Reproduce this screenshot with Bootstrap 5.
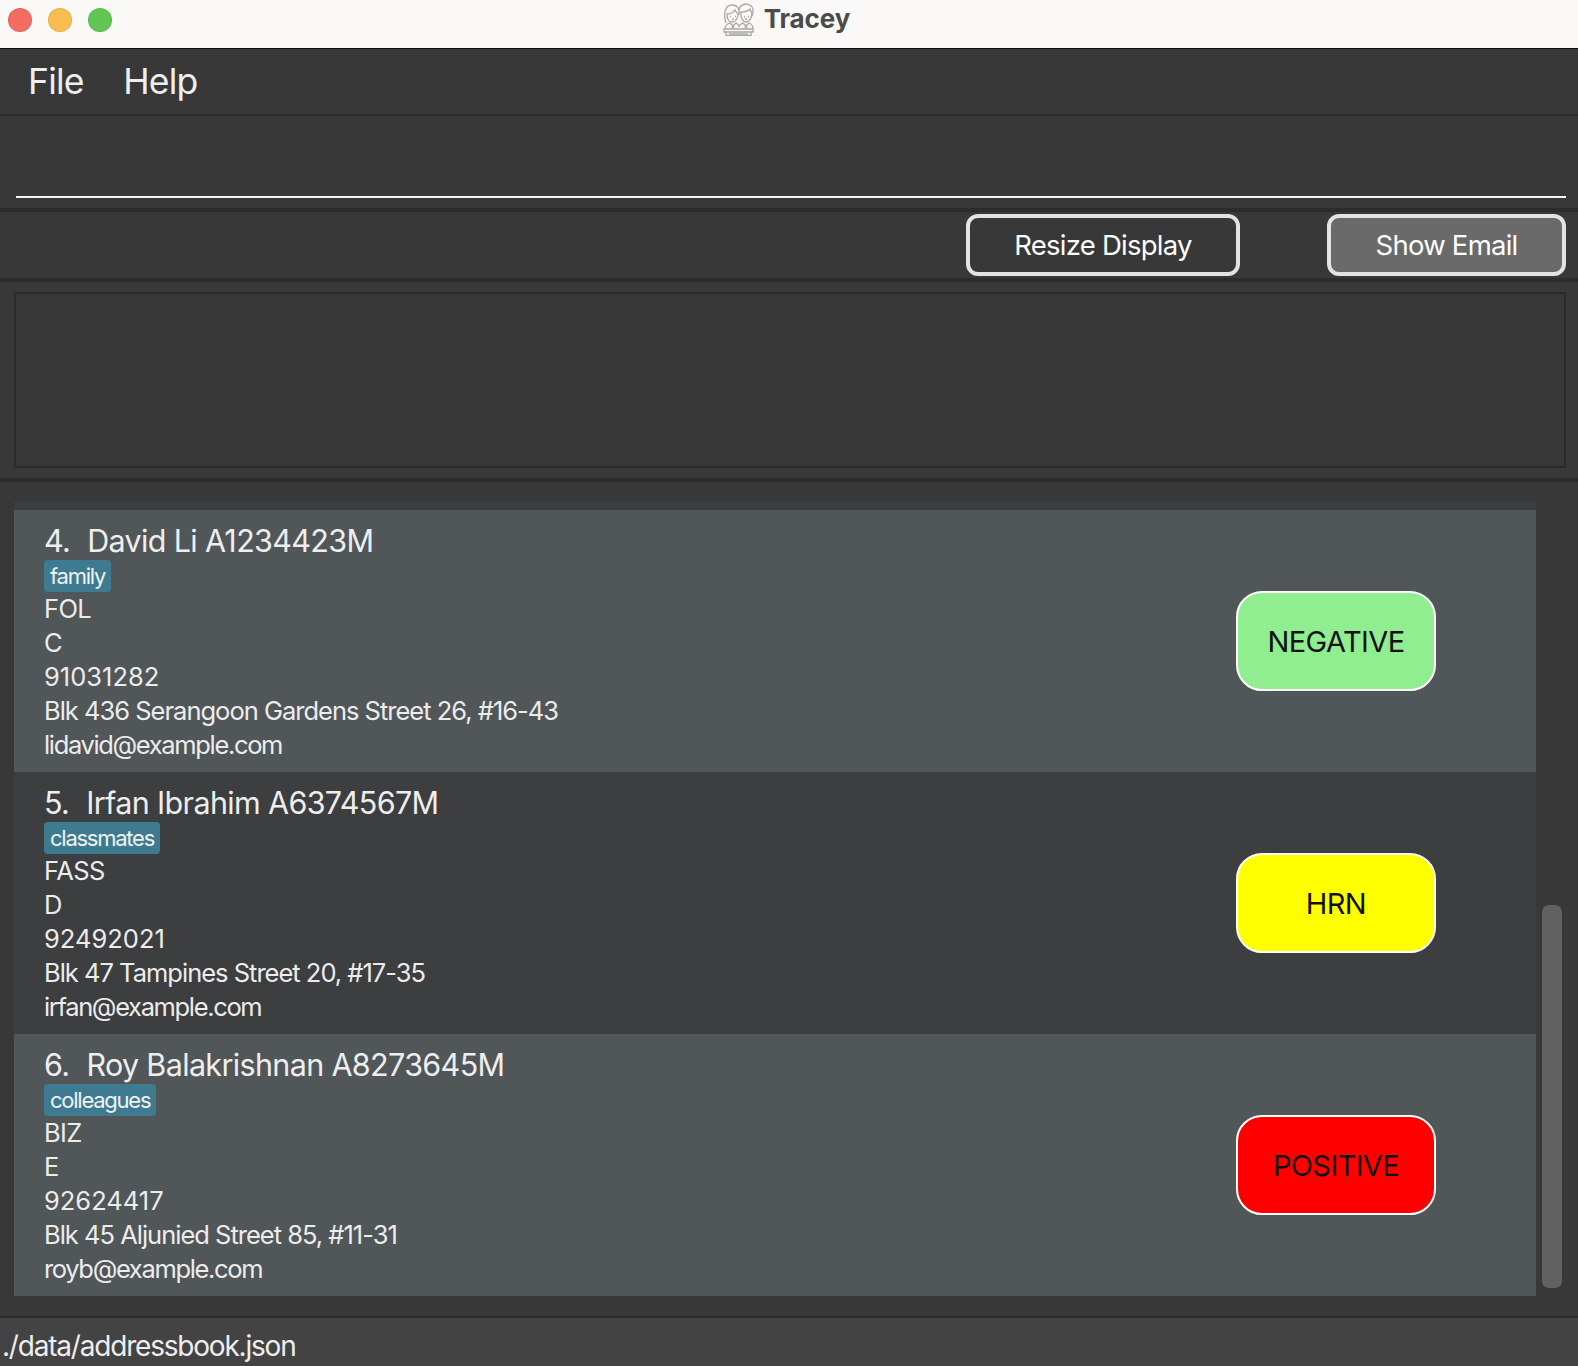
<!DOCTYPE html>
<html lang="en">
<head>
<meta charset="utf-8">
<title>Tracey</title>
<link href="https://cdn.jsdelivr.net/npm/bootstrap@5.3.0/dist/css/bootstrap.min.css" rel="stylesheet">
<style>
html,body{height:100%;}
body{background:#383838;font-family:Inter,"Liberation Sans",sans-serif;color:#f0f0f0;overflow:hidden;height:1366px;}
.win-bar{height:49px;background:#faf9f7;border-bottom:1px solid #111;display:grid;grid-template-columns:1fr auto 1fr;align-items:center;padding:0 0 8px 8px;}
.lights{display:flex;gap:16px;}
.lights span{width:24px;height:24px;border-radius:50%;display:block;border:1px solid rgba(0,0,0,.08);}
.win-title{display:flex;align-items:center;gap:9px;font-size:26px;font-weight:700;color:#4b4b4b;letter-spacing:-.1px;line-height:1;margin-top:-2px;margin-left:-14px;}
.menu-row{height:67px;border-bottom:2px solid #2c2c2c;padding:0 28px;gap:39.500px;}
.menu-row a{font-size:35.500px;color:#efefef;text-decoration:none;letter-spacing:-.8px;line-height:1;}
.cmd-box{height:92px;padding:0 12px 0 16px;}
.cmd-line{height:82px;border-bottom:2px solid #f4f4f4;}
.band{height:4px;background:#2c2c2c;}
.tool-row{height:66px;padding:2px 12px 0 0;gap:87px;}
.tool-btn{height:62px;border:4px solid #e3e3e3;border-radius:12px;background:#383838;color:#fff;font-size:27.500px;letter-spacing:-.75px;padding:2px 0 0;display:flex;align-items:center;justify-content:center;line-height:1;}
.tool-btn:hover{background:#383838;color:#fff;border-color:#e3e3e3;}
.w-resize{width:274px;}
.w-email{width:239px;background:#6a6a6a;}
.w-email:hover{background:#6a6a6a;}
.result-wrap{height:196px;padding:10px 12px 10px 14px;}
.result-box{height:100%;border:2px solid #2b2b2b;background:#383838;}
.people{height:834px;padding:20px 0 0 14px;position:relative;}
.people-list{width:1522px;border-radius:0;padding-top:8px;background:#3c3e3f;}
.person{height:262px;border:0;border-radius:0;padding:13px 0 0 30px;color:#ececec;display:flex;justify-content:space-between;}
.person:nth-child(odd){background:#515658;}
.person:nth-child(even){background:#3c3e3f;}
.p-name{font-size:30.500px;line-height:35px;height:36px;letter-spacing:-.65px;color:#eeeeee;}
.p-name b{font-weight:400;margin-right:17px;}
.p-tag{display:inline-block;background:#3e7b91;color:#f2f2f2;font-size:22px;font-weight:400;line-height:32px;height:32px;padding:0 6px;border-radius:4px;letter-spacing:-1.250px;margin:1px 0 0;vertical-align:top;}
.p-line{font-size:25.500px;line-height:34px;letter-spacing:-1.350px;}
.p-caps{letter-spacing:-.6px;}
.p-num{letter-spacing:0;}
.p-addr{letter-spacing:-1px;}
.tag-row{height:33px;}
.p-status{width:200px;height:100px;border:2px solid #fff;border-radius:26px;color:#111;font-size:29px;letter-spacing:-.6px;margin:68px 100px 0 0;display:flex;align-items:center;justify-content:center;padding:1px 0 0;line-height:1;}
.p-status:hover{color:#111;border-color:#fff;}
.st-neg,.st-neg:hover{background:#90ee90;}
.st-hrn,.st-hrn:hover{background:#ff0;}
.st-pos,.st-pos:hover{background:#f00;}
.thumb{position:absolute;left:1542px;top:423px;width:20px;height:383px;border-radius:7px;background:#616161;}
.foot-bar{height:50px;border-top:2px solid #2c2c2c;background:#434343;font-size:28px;letter-spacing:-1.200px;line-height:1;padding:14px 0 0 2px;color:#eeeeee;white-space:nowrap;}
</style>
</head>
<body>
<header class="win-bar">
  <div class="lights"><span style="background:#f36d62"></span><span style="background:#f8be50"></span><span style="background:#61c654"></span></div>
  <div class="win-title">
    <svg width="33" height="33" viewBox="0 0 33 33" fill="none" stroke="#a8a8a8" stroke-width="1.300" aria-hidden="true">
      <path d="M4 20C1 11 3 2 10 2c6 0 8 5 7 10"/>
      <path d="M5 11c3 0 6-1 8-4 1 2 2 3 3 4 0 5-3 8-6 8s-5-3-5-8z"/>
      <path d="M17 7c0-3 3-6 8-6 2 1 4 1 5 3 2 3 1 6 0 9"/>
      <path d="M19 9c3 0 7-1 9-3 1 2 1 3 2 4 0 5-3 9-6 9s-6-4-5-10z"/>
      <path d="M8 13.500h1M13 13.500h1M22 13.500h1M26 13.500h1M10 16h2M23 16h2"/>
      <path d="M3 26c0-3 2-5 5-6l3 3 3-3c2 1 3 2 3 4 0-2 2-3 4-4l3 3 3-3c3 1 4 3 4 6"/>
      <path d="M10 25l1-2 1 2M23 25l1-2 1 2"/>
      <path d="M2 26h29v3H2zM4 29v3.500h25V29M7 30.800h19"/>
    </svg>
    <span>Tracey</span>
  </div>
  <div></div>
</header>

<nav class="menu-row d-flex align-items-center">
  <a href="#">File</a>
  <a href="#">Help</a>
</nav>

<section class="cmd-box"><div class="cmd-line"></div></section>
<div class="band"></div>

<section class="tool-row d-flex justify-content-end">
  <button type="button" class="btn tool-btn w-resize">Resize Display</button>
  <button type="button" class="btn tool-btn w-email">Show Email</button>
</section>
<div class="band"></div>

<section class="result-wrap"><div class="result-box"></div></section>
<div class="band"></div>

<main class="people">
  <ul class="list-group people-list">
    <li class="list-group-item person">
      <div>
        <div class="p-name"><b>4.</b>David Li A1234423M</div>
        <div class="tag-row"><span class="p-tag">family</span></div>
        <div class="p-line p-caps">FOL</div>
        <div class="p-line p-caps">C</div>
        <div class="p-line p-num">91031282</div>
        <div class="p-line p-addr">Blk 436 Serangoon Gardens Street 26, #16-43</div>
        <div class="p-line">lidavid@example.com</div>
      </div>
      <button type="button" class="btn p-status st-neg">NEGATIVE</button>
    </li>
    <li class="list-group-item person">
      <div>
        <div class="p-name"><b>5.</b>Irfan Ibrahim A6374567M</div>
        <div class="tag-row"><span class="p-tag">classmates</span></div>
        <div class="p-line p-caps">FASS</div>
        <div class="p-line p-caps">D</div>
        <div class="p-line p-num">92492021</div>
        <div class="p-line p-addr">Blk 47 Tampines Street 20, #17-35</div>
        <div class="p-line">irfan@example.com</div>
      </div>
      <button type="button" class="btn p-status st-hrn">HRN</button>
    </li>
    <li class="list-group-item person">
      <div>
        <div class="p-name"><b>6.</b>Roy Balakrishnan A8273645M</div>
        <div class="tag-row"><span class="p-tag">colleagues</span></div>
        <div class="p-line p-caps">BIZ</div>
        <div class="p-line p-caps">E</div>
        <div class="p-line p-num">92624417</div>
        <div class="p-line p-addr">Blk 45 Aljunied Street 85, #11-31</div>
        <div class="p-line">royb@example.com</div>
      </div>
      <button type="button" class="btn p-status st-pos">POSITIVE</button>
    </li>
  </ul>
  <div class="thumb"></div>
</main>

<footer class="foot-bar">./data/addressbook.json</footer>
</body>
</html>
